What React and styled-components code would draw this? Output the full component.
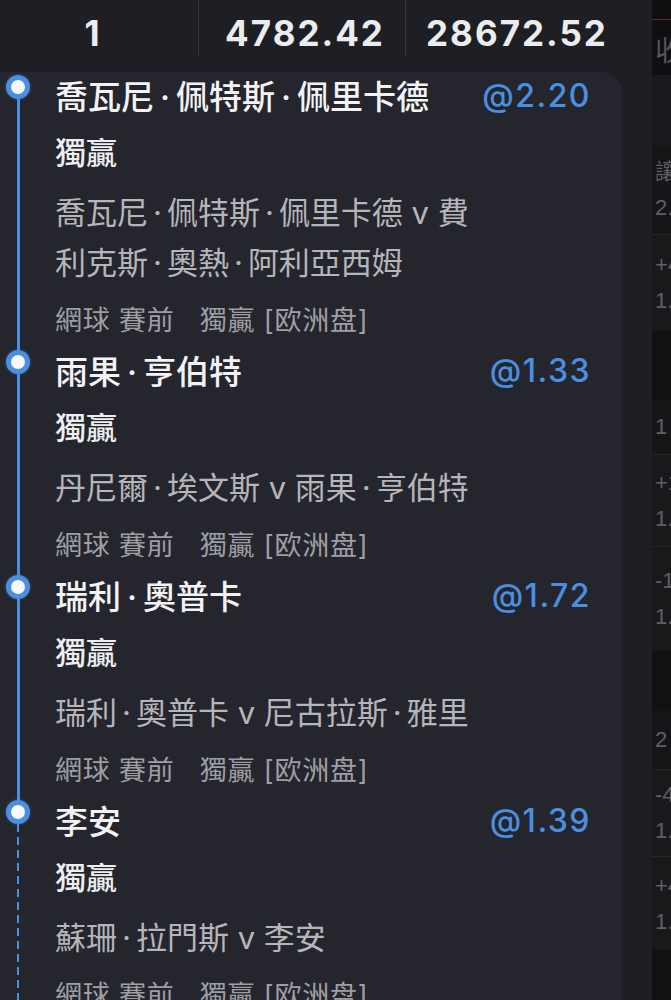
import { Fragment } from "react";
import styled, { createGlobalStyle } from "styled-components";

const GlobalStyle = createGlobalStyle`
  html, body {
    margin: 0;
    padding: 0;
    background: #141417;
  }
  body {
    font-family: Inter, "Noto Sans CJK TC", sans-serif;
  }
`;

const BLUE = "#4a90e2";

const Page = styled.div`
  width: 671px;
  height: 1000px;
  display: flex;
  overflow: hidden;
`;

const Sheet = styled.div`
  width: 652px;
  flex-shrink: 0;
  background-color: #1e1f25;
  display: flex;
  flex-direction: column;
  overflow: hidden;
`;

const StatsBar = styled.div`
  height: 72px;
  flex-shrink: 0;
  display: flex;
  align-items: flex-start;
`;

const StatCell = styled.div`
  width: ${({ $w }) => $w}px;
  height: 56px;
  padding-top: 10px;
  padding-left: ${({ $pl }) => $pl || 0}px;
  padding-right: ${({ $pr }) => $pr || 0}px;
  box-sizing: border-box;
  display: flex;
  justify-content: center;
  border-right: ${({ $last }) => ($last ? "none" : "1px solid #34353c")};
  font-family: Inter, sans-serif;
  font-weight: 700;
  font-size: 35px;
  line-height: 46px;
  letter-spacing: 2px;
  color: #ececee;
`;

const Body = styled.div`
  flex: 1;
  min-height: 0;
  display: flex;
`;

const Card = styled.div`
  width: 622px;
  background-color: #25262d;
  border-top-right-radius: 20px;
`;

const Item = styled.div`
  display: flex;
`;

const Rail = styled.div`
  width: 36px;
  flex-shrink: 0;
  display: flex;
  flex-direction: column;
  align-items: center;
`;

const RailTop = styled.div`
  width: 3px;
  height: 3px;
  background: ${({ $hidden }) => ($hidden ? "transparent" : BLUE)};
`;

const Dot = styled.div`
  width: 24px;
  height: 24px;
  flex-shrink: 0;
  box-sizing: border-box;
  border-radius: 50%;
  background: #f7f9fc;
  border: 5px solid ${BLUE};
  box-shadow: 0 0 3px rgba(74, 144, 226, 0.5);
`;

const RailLine = styled.div`
  flex: 1;
  width: ${({ $dashed }) => ($dashed ? 2 : 3)}px;
  background: ${({ $dashed }) =>
    $dashed
      ? `repeating-linear-gradient(to bottom, ${BLUE} 0 8px, transparent 8px 13px)`
      : BLUE};
`;

const Content = styled.div`
  flex: 1;
  margin-left: 19px;
  padding-right: 31px;
  padding-bottom: 8px;
`;

const NameRow = styled.div`
  height: 46px;
  display: flex;
  align-items: center;
  justify-content: space-between;
`;

const Name = styled.span`
  font-size: 33px;
  font-weight: 500;
  color: #f3f3f5;
`;

const Sep = styled.span`
  padding: 0 ${({ $gap }) => $gap}px;
`;

const Odds = styled.span`
  font-family: Inter, sans-serif;
  font-size: 32px;
  font-weight: 500;
  letter-spacing: 1.5px;
  color: ${BLUE};
`;

const Market = styled.div`
  margin-top: 13px;
  font-size: 31px;
  line-height: 44px;
  font-weight: 500;
  color: #eeeef0;
`;

const Match = styled.div`
  margin-top: 13px;
  max-width: 430px;
  font-size: 31px;
  line-height: 50px;
  color: #b5b5ba;
`;

const Meta = styled.div`
  margin-top: 15px;
  font-size: 27px;
  line-height: 36px;
  letter-spacing: 0.8px;
  color: #9e9ea4;
  white-space: pre;
`;

const Backdrop = styled.div`
  flex: 1;
  display: flex;
  flex-direction: column;
  overflow: hidden;
  background: #121215;
`;

const BackRow = styled.div`
  height: ${({ $h }) => $h}px;
  flex-shrink: 0;
  box-sizing: border-box;
  background: ${({ $bg }) => $bg};
  border-bottom: ${({ $line }) => ($line ? "1px solid #26262a" : "none")};
  display: flex;
  flex-direction: column;
  justify-content: center;
  padding-left: 3px;
  gap: 12px;
  font-family: "Liberation Sans", "Noto Sans CJK TC", sans-serif;
  font-size: 22px;
  line-height: 24px;
  white-space: nowrap;
  color: #5f5f64;
`;

const TopBackRow = styled(BackRow)`
  justify-content: flex-start;
  gap: 0;
`;

const RedRule = styled.div`
  height: 1px;
  margin-top: 19px;
  margin-left: -3px;
  background: #6a2327;
`;

const BigGlyph = styled.span`
  margin-top: 16px;
  font-size: 28px;
  line-height: 32px;
  color: #55555a;
`;

const bets = [
  {
    name: "喬瓦尼·佩特斯·佩里卡德",
    odds: "@2.20",
    match: "喬瓦尼·佩特斯·佩里卡德 v 費利克斯·奧熱·阿利亞西姆",
  },
  { name: "雨果·亨伯特", odds: "@1.33", match: "丹尼爾·埃文斯 v 雨果·亨伯特" },
  { name: "瑞利·奧普卡", odds: "@1.72", match: "瑞利·奧普卡 v 尼古拉斯·雅里" },
  { name: "李安", odds: "@1.39", match: "蘇珊·拉門斯 v 李安" },
];

const backRows = [
  { h: 70, bg: "#1a1a1e" },
  { h: 90, bg: "#151518", lines: ["讓球", "2.0"], line: true },
  { h: 95, bg: "#19191c", lines: ["+4", "1.0"] },
  { h: 70, bg: "#111114" },
  { h: 55, bg: "#151518", lines: ["1"], line: true },
  { h: 92, bg: "#19191c", lines: ["+1", "1.8"], line: true },
  { h: 103, bg: "#19191c", lines: ["-1", "1.8"] },
  { h: 60, bg: "#111114" },
  { h: 60, bg: "#151518", lines: ["2"], line: true },
  { h: 87, bg: "#19191c", lines: ["-4", "1.8"], line: true },
  { h: 93, bg: "#19191c", lines: ["+4", "1.9"] },
  { h: 50, bg: "#111114" },
];

// names are joined with a middle dot, which the app draws a bit wider
const withDots = (text, gap) =>
  text.split("·").map((part, i) => (
    <Fragment key={i}>
      {i > 0 && <Sep $gap={gap}>·</Sep>}
      {part}
    </Fragment>
  ));

function BetItem({ bet, first, last }) {
  return (
    <Item>
      <Rail>
        <RailTop $hidden={first} />
        <Dot />
        <RailLine $dashed={last} />
      </Rail>
      <Content>
        <NameRow>
          <Name>{withDots(bet.name, 6)}</Name>
          <Odds>{bet.odds}</Odds>
        </NameRow>
        <Market>獨贏</Market>
        <Match>{withDots(bet.match, 5)}</Match>
        <Meta>{"網球 賽前   獨贏 [欧洲盘]"}</Meta>
      </Content>
    </Item>
  );
}

export default function App() {
  return (
    <>
      <GlobalStyle />
      <Page>
        <Sheet>
          <StatsBar>
            <StatCell $w={199} $pr={12}>1</StatCell>
            <StatCell $w={207} $pl={6}>4782.42</StatCell>
            <StatCell $w={210} $pl={12} $last>28672.52</StatCell>
          </StatsBar>
          <Body>
            <Card>
              {bets.map((bet, i) => (
                <BetItem
                  key={bet.name}
                  bet={bet}
                  first={i === 0}
                  last={i === bets.length - 1}
                />
              ))}
            </Card>
          </Body>
        </Sheet>
        <Backdrop>
          <TopBackRow $h={75} $bg="#0f0f12">
            <RedRule />
            <BigGlyph>收</BigGlyph>
          </TopBackRow>
          {backRows.map((row, i) => (
            <BackRow key={i} $h={row.h} $bg={row.bg} $line={row.line}>
              {row.lines?.map((t) => (
                <span key={t}>{t}</span>
              ))}
            </BackRow>
          ))}
        </Backdrop>
      </Page>
    </>
  );
}
